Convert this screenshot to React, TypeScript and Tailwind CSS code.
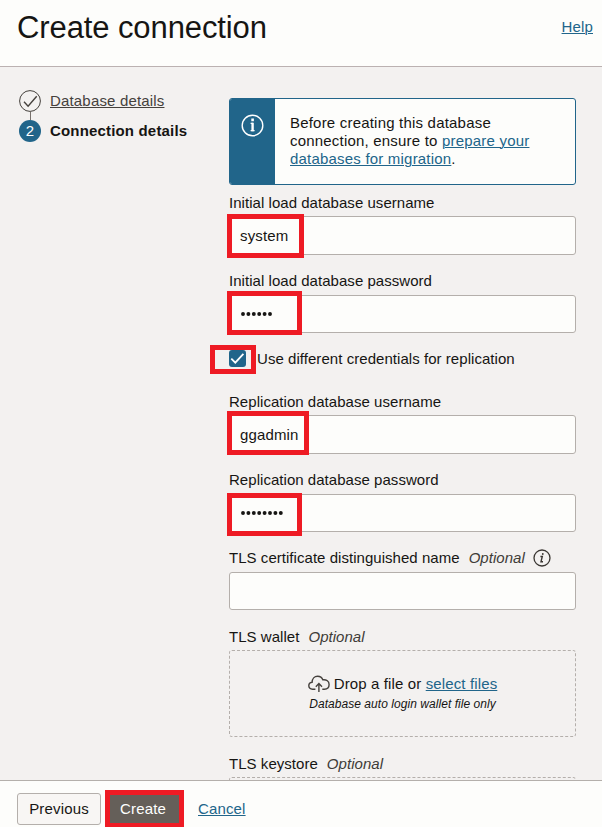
import type { ReactNode } from "react";

const link = "text-[#21658a] underline decoration-1 underline-offset-1";

function Highlight({ className }: { className: string }) {
  return <span className={`pointer-events-none absolute border-[5px] border-[#ee1b24] ${className}`} />;
}

function Label({ children, optional }: { children: ReactNode; optional?: boolean }) {
  return (
    <div className="flex h-[18px] items-center whitespace-nowrap tracking-[0.04px]">
      <span>{children}</span>
      {optional && <span className="ml-[9px] italic text-[#403c38]">Optional</span>}
    </div>
  );
}

function Box({ className, children }: { className: string; children?: ReactNode }) {
  return (
    <div className={`relative flex items-center rounded-[3px] border border-[#b4afab] bg-[#fdfdfb] pl-[10px] tracking-[0.15px] ${className}`}>
      {children}
    </div>
  );
}

function Dots({ count }: { count: number }) {
  return (
    <svg width={count * 5.4 + 2} height="6" fill="#161513">
      {Array.from({ length: count }, (_, i) => (
        <circle key={i} cx={3 + i * 5.4} cy="3" r="1.95" />
      ))}
    </svg>
  );
}

export default function App() {
  return (
    <div className="flex h-[827px] w-[602px] flex-col overflow-hidden bg-[#f3f1f0] font-['Liberation_Sans',Arial,sans-serif] text-[15px] leading-[18px] text-[#161513]">
      <header className="flex h-[67px] shrink-0 items-start justify-between border-b border-[#bbb1b1] bg-[#fdfdfb] pl-[17px] pr-[9px]">
        <h1 className="pt-[10px] text-[31px] leading-9 tracking-[-0.1px]">Create connection</h1>
        <a className={`mt-[18px] tracking-[0.15px] ${link}`}>Help</a>
      </header>

      <main className="flex min-h-0 flex-1 overflow-hidden">
        <nav className="flex w-[229px] shrink-0 pl-[19px] pt-[23px]">
          <div className="flex w-[22px] flex-col items-center">
            <svg width="22" height="22" viewBox="0 0 22 22" fill="none" stroke="#45413d">
              <circle cx="11" cy="11" r="10.4" strokeWidth="1" />
              <path d="M5 11.8l4.1 4.4L17.7 6.2" strokeWidth="1.4" />
            </svg>
            <span className="h-[8px] w-px bg-[#77716c]" />
            <span className="flex h-[22px] w-[22px] items-center justify-center rounded-full bg-[#21658a] text-white">2</span>
          </div>
          <div className="ml-[9px] flex flex-col gap-3 whitespace-nowrap pt-[2px] tracking-[0.17px]">
            <a className="text-[#45413d] underline decoration-1 underline-offset-1">Database details</a>
            <span className="font-bold">Connection details</span>
          </div>
        </nav>

        <section className="w-[347px] shrink-0 pt-[31px]">
          <div className="flex h-[87px] overflow-hidden rounded-[3px] border border-[#21658a] bg-[#fdfdfb]">
            <div className="flex w-[45px] shrink-0 justify-center bg-[#21658a] pt-[15px]">
              <svg width="23" height="23" viewBox="0 0 23 23" fill="none" stroke="#fff">
                <circle cx="11.5" cy="11.5" r="10.3" strokeWidth="1.4" />
                <path d="M9.6 9.4h2.4M9.6 16.6h4" strokeWidth="1.2" />
                <path d="M11.6 8.8v8.4" strokeWidth="2.4" />
                <path d="M11.6 4.6v2.6" strokeWidth="2.6" />
              </svg>
            </div>
            <p className="whitespace-nowrap pl-[15px] pt-[15px] tracking-[0.2px]">
              Before creating this database
              <br />
              connection, ensure to <a className={link}>prepare your</a>
              <br />
              <a className={link}>databases for migration</a>.
            </p>
          </div>

          <div className="mt-[9px]">
            <Label>Initial load database username</Label>
            <Box className="mt-[4px] h-[39px]">
              system
              <Highlight className="-left-[3px] -top-[3px] h-11 w-[77px]" />
            </Box>
          </div>
          <div className="mt-[17px]">
            <Label>Initial load database password</Label>
            <Box className="mt-[5px] h-[38px]">
              <Dots count={6} />
              <Highlight className="-left-[3px] -top-[5px] h-11 w-[75px]" />
            </Box>
          </div>

          <div className="relative mt-[17px] flex h-[18px] items-start">
            <span className="flex h-[17px] w-[17px] items-center justify-center rounded-[3px] bg-[#21658a]">
              <svg width="17" height="17" viewBox="0 0 17 17" fill="none" stroke="#fff">
                <path d="M2.3 8.7l4 4L14.4 3.9" strokeWidth="1.8" />
              </svg>
            </span>
            <span className="ml-[11px] whitespace-nowrap tracking-[0.05px]">Use different credentials for replication</span>
            <Highlight className="-left-[19px] -top-[5px] h-[29px] w-[46px]" />
          </div>

          <div className="mt-[25px]">
            <Label>Replication database username</Label>
            <Box className="mt-[4px] h-[39px]">
              ggadmin
              <Highlight className="-left-[3px] -top-[5px] h-11 w-[82px]" />
            </Box>
          </div>
          <div className="mt-[17px]">
            <Label>Replication database password</Label>
            <Box className="mt-[5px] h-[38px]">
              <Dots count={8} />
              <Highlight className="-left-[3px] -top-[2px] h-[43px] w-[75px]" />
            </Box>
          </div>
          <div className="mt-[17px]">
            <div className="flex items-center">
              <Label optional>TLS certificate distinguished name</Label>
              <svg className="ml-[8px]" width="18" height="18" viewBox="0 0 18 18" fill="none" stroke="#3a3632">
                <circle cx="9" cy="9" r="8" strokeWidth="1.3" />
                <path d="M7.4 7.5h1.9L8 12.7h2" strokeWidth="1.4" />
                <circle cx="9.8" cy="5" r="0.9" fill="#3a3632" stroke="none" />
              </svg>
            </div>
            <Box className="mt-[5px] h-[38px]" />
          </div>
          <div className="mt-[18px]">
            <Label optional>TLS wallet</Label>
            <div className="mt-[4px] flex h-[87px] flex-col items-center rounded-[3px] border border-dashed border-[#b4afab] pt-[24px]">
              <div className="flex items-center whitespace-nowrap tracking-[0.13px]">
                <svg className="mr-[4px]" width="22" height="18" viewBox="0 0 22 18" fill="none" stroke="#45413d" strokeWidth="1.4">
                  <path d="M7.4 14.2H4.5C2.4 14.2.8 12.8.8 10.8c0-2 1.4-3.3 3.3-3.5C4.2 3.7 6.4 1.2 9.6 1.2c2.5 0 4.4 1.3 5.2 3.6 3.7-.5 6.3 1.6 6.3 4.7 0 2.8-2 4.7-4.7 4.7h-2.1" />
                  <path d="M10.9 17V8.8M7.8 11.7l3.1-3.1 3.1 3.1" />
                </svg>
                <span>
                  Drop a file or <a className={link}>select files</a>
                </span>
              </div>
              <span className="mt-[3px] text-[12px] italic leading-[16px] tracking-[0.05px]">Database auto login wallet file only</span>
            </div>
          </div>
          <div className="mt-[18px]">
            <Label optional>TLS keystore</Label>
            <div className="mt-[4px] h-[87px] rounded-[3px] border border-dashed border-[#b4afab]" />
          </div>
        </section>
      </main>

      <footer className="flex h-[47px] shrink-0 items-start border-t border-[#b4afab] bg-[#fdfdfb] pl-[17px] tracking-[0.15px]">
        <button className="mt-3 h-8 w-[84px] rounded-[3px] border border-[#b4afab] bg-[#f8f6f4] tracking-[0.15px]">Previous</button>
        <button className="relative ml-[8px] mt-[13px] h-[30px] w-[70px] bg-[#655f59] pr-[2px] tracking-[0.15px] text-white">
          Create
          <Highlight className="-left-[4px] -top-[4px] h-[38px] w-[79px]" />
        </button>
        <a className={`ml-[19px] mt-[19px] ${link}`}>Cancel</a>
      </footer>
    </div>
  );
}
